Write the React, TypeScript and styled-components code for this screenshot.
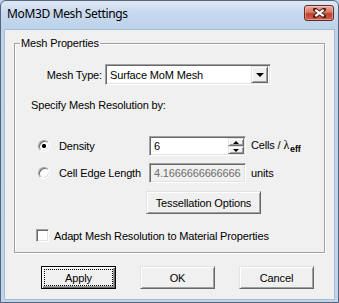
import styled, { createGlobalStyle } from "styled-components";

const GlobalStyle = createGlobalStyle`
  html, body {
    margin: 0;
    padding: 0;
    background: #bcd3eb;
  }
  body {
    font-family: "Liberation Sans", Arial, sans-serif;
    font-size: 11px;
    letter-spacing: -0.15px;
    color: #000;
  }
  * {
    box-sizing: border-box;
  }
`;

export default function App() {
  return (
    <>
      <GlobalStyle />
      <Window>
        <TitleBar>
          <Title>MoM3D Mesh Settings</Title>
          <CloseButton aria-label="Close">
            <svg width="13" height="10" viewBox="0 0 13 10">
              <path d="M2 1.5 L11 8.5 M11 1.5 L2 8.5" stroke="#4a1d16" strokeWidth="4" strokeLinecap="square" />
              <path d="M2.3 1.8 L10.7 8.2 M10.7 1.8 L2.3 8.2" stroke="#fff" strokeWidth="2.2" />
            </svg>
          </CloseButton>
        </TitleBar>
        <Client>
          <GroupBox>
            <Legend>Mesh Properties</Legend>
            <MeshTypeRow>
              <FieldLabel>Mesh Type:</FieldLabel>
              <Combo>
                <ComboText>Surface MoM Mesh</ComboText>
                <DropButton>
                  <Arrow $dir="down" $size={4} />
                </DropButton>
              </Combo>
            </MeshTypeRow>
            <SectionText>Specify Mesh Resolution by:</SectionText>
            <RadioRow $top={24}>
              <Radio $checked />
              <RadioLabel>Density</RadioLabel>
              <Field>
                <FieldText>6</FieldText>
                <Spin>
                  <SpinButton>
                    <Arrow $dir="up" $size={3} />
                  </SpinButton>
                  <SpinButton>
                    <Arrow $dir="down" $size={3} />
                  </SpinButton>
                </Spin>
              </Field>
              <Unit>
                Cells / <Lambda>λ</Lambda>
                <Sub>eff</Sub>
              </Unit>
            </RadioRow>
            <RadioRow $top={7}>
              <Radio />
              <RadioLabel>Cell Edge Length</RadioLabel>
              <Field $disabled>
                <FieldText>4.1666666666666</FieldText>
              </Field>
              <Unit>units</Unit>
            </RadioRow>
            <TessellationButton>Tessellation Options</TessellationButton>
            <CheckRow>
              <CheckBox />
              <CheckLabel>Adapt Mesh Resolution to Material Properties</CheckLabel>
            </CheckRow>
          </GroupBox>
          <ButtonRow>
            <DialogButton $default>
              <FocusText>Apply</FocusText>
            </DialogButton>
            <DialogButton>OK</DialogButton>
            <DialogButton>Cancel</DialogButton>
          </ButtonRow>
        </Client>
      </Window>
    </>
  );
}

const Window = styled.div`
  width: 339px;
  height: 303px;
  display: flex;
  flex-direction: column;
  border: 1px solid #56657a;
  border-radius: 6px 6px 0 0;
  background: linear-gradient(#dde8f5, #c7d9ee 12px, #bcd3eb 28px, #bfd5ec);
  overflow: hidden;
`;

const TitleBar = styled.div`
  height: 28px;
  flex: none;
  display: flex;
  align-items: center;
  justify-content: space-between;
  padding: 0 4px 2px 6px;
`;

const Title = styled.div`
  font-family: "Noto Sans", "Open Sans", sans-serif;
  font-size: 12px;
  letter-spacing: -0.35px;
  line-height: 16px;
`;

const CloseButton = styled.div`
  width: 30px;
  height: 16px;
  margin-bottom: 2px;
  display: flex;
  align-items: center;
  justify-content: center;
  border: 1px solid #6b2a20;
  border-radius: 3px;
  background: linear-gradient(#e9a99c, #d87a68 45%, #c0412f 55%, #d2624c);
  box-shadow: inset 0 0 0 1px rgba(255, 255, 255, 0.35);
`;

const Client = styled.div`
  flex: 1;
  margin: 0 3px 2px;
  border: 1px solid #a8bbd1;
  background: #f0f0f0;
  padding: 0 9px;
  display: flex;
  flex-direction: column;
`;

const GroupBox = styled.div`
  position: relative;
  margin-top: 13px;
  border: 1px solid #a0a0a0;
  box-shadow: 1px 1px 0 #fff, inset 1px 1px 0 #fff;
  padding-bottom: 10px;
  display: flex;
  flex-direction: column;
`;

const Legend = styled.span`
  position: absolute;
  top: -7px;
  left: 5px;
  padding: 0 1px;
  line-height: 13px;
  background: #f0f0f0;
`;

const MeshTypeRow = styled.div`
  margin-top: 20px;
  height: 21px;
  display: flex;
  align-items: center;
`;

const FieldLabel = styled.div`
  width: 87px;
  margin-right: 3px;
  text-align: right;
`;

const sunken = `
  border: 1px solid;
  border-color: #a0a0a0 #fff #fff #a0a0a0;
  box-shadow: inset 1px 1px 0 #696969, inset -1px -1px 0 #e3e3e3;
`;

const raised = `
  border: 1px solid;
  border-color: #e3e3e3 #696969 #696969 #e3e3e3;
  box-shadow: inset 1px 1px 0 #fff, inset -1px -1px 0 #a0a0a0;
  background: #f0f0f0;
`;

const Combo = styled.div`
  width: 166px;
  height: 21px;
  ${sunken}
  background: #fff;
  display: flex;
  align-items: center;
  padding: 2px 2px 2px 4px;
`;

const ComboText = styled.div`
  flex: 1;
`;

const DropButton = styled.div`
  width: 17px;
  height: 17px;
  ${raised}
  display: flex;
  align-items: center;
  justify-content: center;
  padding-top: 1px;
`;

const Arrow = styled.span<{ $dir: "up" | "down"; $size: number }>`
  width: 0;
  height: 0;
  border-left: ${(p) => p.$size}px solid transparent;
  border-right: ${(p) => p.$size}px solid transparent;
  ${(p) =>
    p.$dir === "down"
      ? `border-top: ${p.$size}px solid #000;`
      : `border-bottom: ${p.$size}px solid #000;`}
`;

const SectionText = styled.div`
  margin-top: 14px;
  padding-left: 16px;
  line-height: 13px;
`;

const RadioRow = styled.div<{ $top: number }>`
  margin-top: ${(p) => p.$top}px;
  height: 20px;
  padding-left: 23px;
  display: flex;
  align-items: center;
`;

const Radio = styled.span<{ $checked?: boolean }>`
  width: 12px;
  height: 12px;
  flex: none;
  border-radius: 50%;
  ${sunken}
  background: ${(p) =>
    p.$checked ? "radial-gradient(circle, #000 0 1.8px, #fff 2.4px)" : "#fff"};
`;

const RadioLabel = styled.span`
  width: 90px;
  margin-left: 9px;
`;

const Field = styled.div<{ $disabled?: boolean }>`
  width: 97px;
  height: 20px;
  ${sunken}
  background: ${(p) => (p.$disabled ? "#f0f0f0" : "#fff")};
  color: ${(p) => (p.$disabled ? "#6d6d6d" : "#000")};
  display: flex;
  align-items: center;
  padding: 2px 0 2px 4px;
  overflow: hidden;
`;

const FieldText = styled.div`
  flex: 1;
  white-space: nowrap;
  overflow: hidden;
`;

const Spin = styled.div`
  width: 16px;
  height: 16px;
  margin-right: 1px;
  display: flex;
  flex-direction: column;
`;

const SpinButton = styled.div`
  flex: 1;
  ${raised}
  display: flex;
  align-items: center;
  justify-content: center;
`;

const Unit = styled.span`
  margin-left: 5px;
  white-space: nowrap;
`;

const Lambda = styled.span`
  font-family: "Liberation Serif", "DejaVu Serif", serif;
  font-size: 12px;
`;

const Sub = styled.sub`
  font-weight: bold;
  font-size: 9px;
  vertical-align: -3px;
  margin-left: 1px;
`;

const TessellationButton = styled.div`
  margin: 8px 0 0 131px;
  width: 115px;
  height: 23px;
  ${raised}
  display: flex;
  align-items: center;
  justify-content: center;
`;

const CheckRow = styled.div`
  margin-top: 15px;
  height: 13px;
  padding-left: 21px;
  display: flex;
  align-items: center;
`;

const CheckBox = styled.span`
  width: 13px;
  height: 13px;
  ${sunken}
  background: #fff;
`;

const CheckLabel = styled.span`
  margin-left: 5px;
`;

const ButtonRow = styled.div`
  margin-top: 13px;
  padding-left: 27px;
  display: flex;
  gap: 24px;
`;

const DialogButton = styled.div<{ $default?: boolean }>`
  width: 75px;
  height: 23px;
  background: #f0f0f0;
  display: flex;
  align-items: center;
  justify-content: center;
  border: 1px solid;
  ${(p) =>
    p.$default
      ? `border-color: #000;
         box-shadow: inset 1px 1px 0 #fff, inset -1px -1px 0 #696969, inset -2px -2px 0 #a0a0a0;
         padding: 3px;`
      : `border-color: #e3e3e3 #696969 #696969 #e3e3e3;
         box-shadow: inset 1px 1px 0 #fff, inset -1px -1px 0 #a0a0a0;`}
`;

const FocusText = styled.span`
  flex: 1;
  align-self: stretch;
  display: flex;
  align-items: center;
  justify-content: center;
  outline: 1px dotted #000;
`;
